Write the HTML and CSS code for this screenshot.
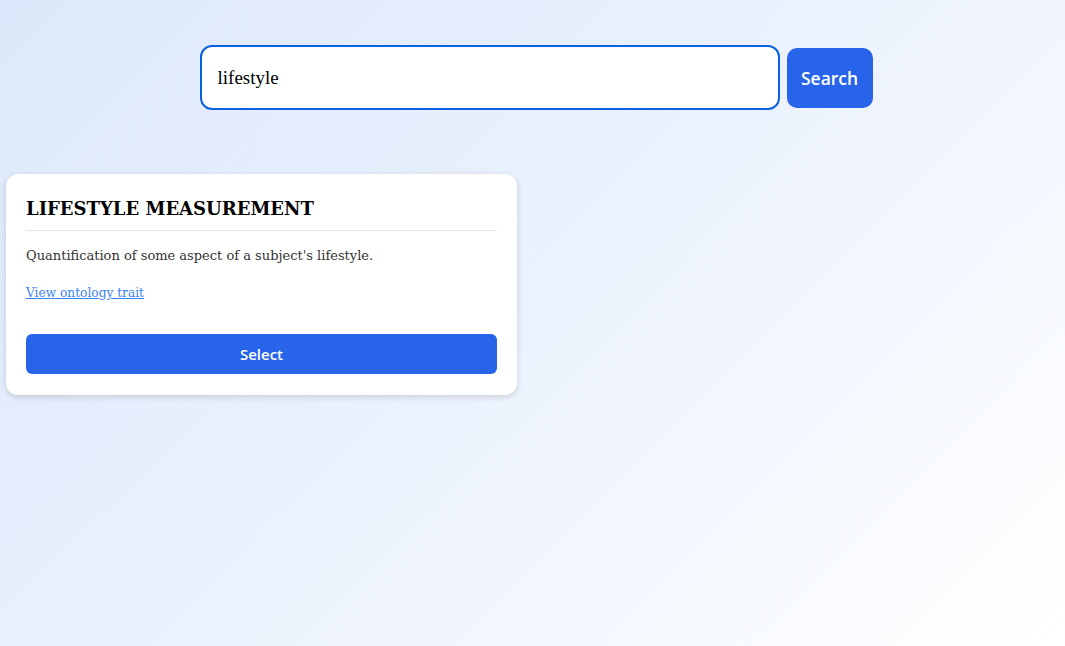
FILE: index.html
```html
<!DOCTYPE html>
<html lang="en">
<head>
<meta charset="utf-8">
<title>Trait search</title>
<link rel="stylesheet" href="styles.css">
</head>
<body>
<main class="page">
  <form class="search">
    <input class="search-input" type="text" value="lifestyle">
    <button class="search-btn" type="button">Search</button>
  </form>
  <section class="results">
    <article class="card">
      <h2 class="card-title">LIFESTYLE MEASUREMENT</h2>
      <p class="card-desc">Quantification of some aspect of a subject's lifestyle.</p>
      <a class="card-link" href="#">View ontology trait</a>
      <button class="select-btn" type="button">Select</button>
    </article>
  </section>
</main>
</body>
</html>
```
FILE: styles.css
```css
html, body {
  margin: 0;
  height: 100%;
}
body {
  background: linear-gradient(135deg, #dce8fb 0%, #eaf1fd 45%, #ffffff 100%);
  font-family: "DejaVu Serif", Georgia, serif;
}
.page {
  padding: 45px 6px 0 6px;
}
.search {
  display: flex;
  align-items: center;
  gap: 7px;
  width: 673px;
  margin: 0 auto;
  padding-left: 7px;
}
.search-input {
  box-sizing: border-box;
  width: 581px;
  height: 65px;
  border: 2px solid #0b62e0;
  border-radius: 12px;
  padding: 0 16px;
  font-family: "Liberation Serif", serif;
  font-size: 19px;
  color: #000;
  background: #fff;
  outline: none;
}
.search-btn {
  box-sizing: border-box;
  width: 86px;
  height: 60px;
  border: none;
  border-radius: 10px;
  background: #2864ea;
  color: #fff;
  font-family: "Open Sans", sans-serif;
  font-weight: 600;
  font-size: 17.5px;
}
.results {
  margin-top: 64px;
}
.card {
  box-sizing: border-box;
  width: 511px;
  background: #fff;
  border-radius: 12px;
  box-shadow: 0 2px 6px rgba(0, 0, 0, 0.15);
  padding: 20px 20px 21px 20px;
  display: flex;
  flex-direction: column;
}
.card-title {
  margin: 0;
  padding: 4px 0 11px 0;
  border-bottom: 1px solid #e3e6ea;
  font-family: "DejaVu Serif", serif;
  font-weight: bold;
  font-size: 18px;
  line-height: 21px;
  letter-spacing: 0;
  color: #000;
}
.card-desc {
  margin: 17px 0 0 0;
  font-size: 13px;
  line-height: 16px;
  color: #333;
}
.card-link {
  margin-top: 22px;
  font-size: 12.2px;
  line-height: 14px;
  color: #3b82f6;
  align-self: flex-start;
}
.select-btn {
  margin-top: 34px;
  height: 40px;
  border: none;
  border-radius: 6px;
  background: #2864ea;
  color: #fff;
  font-family: "Open Sans", sans-serif;
  font-weight: 600;
  font-size: 15px;
}
```
